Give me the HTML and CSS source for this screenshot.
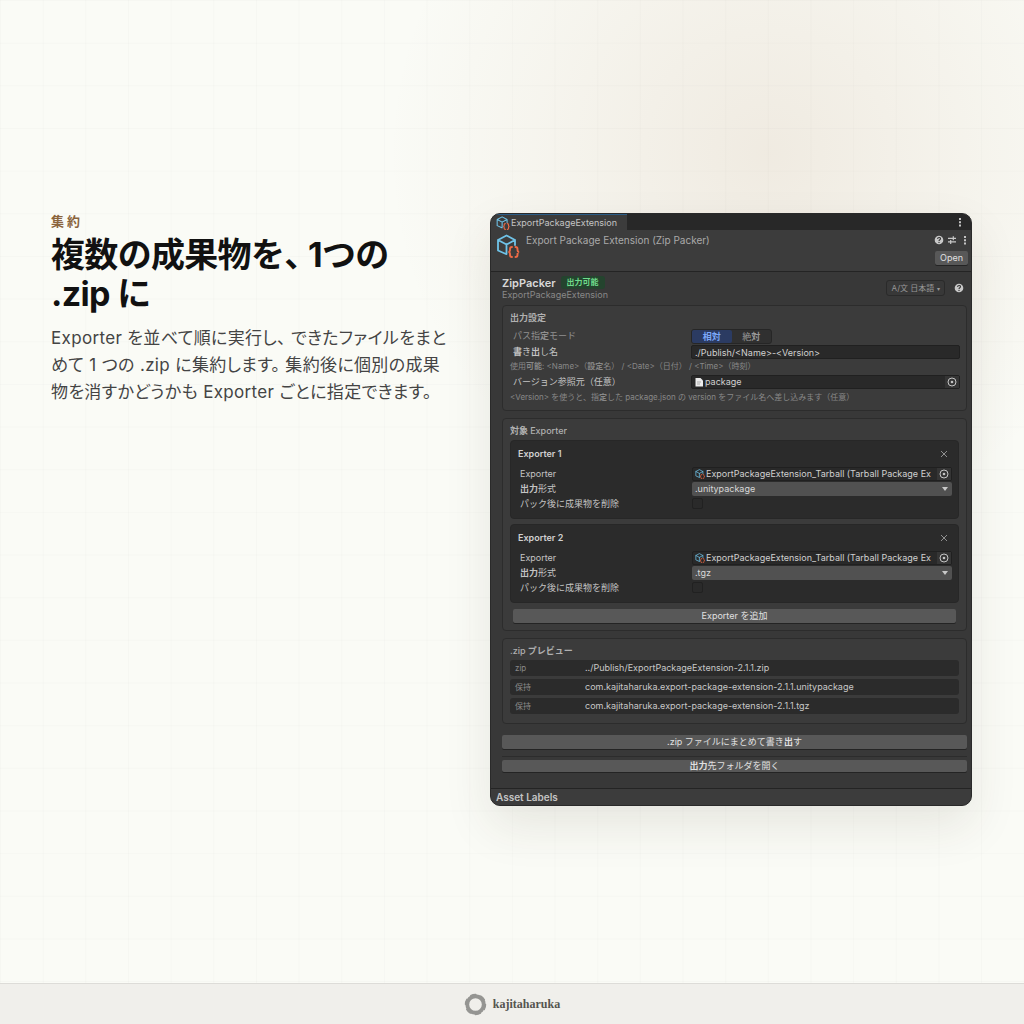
FILE: index.html
```html
<!DOCTYPE html>
<html lang="ja">
<head>
<meta charset="utf-8">
<meta name="viewport" content="width=device-width, initial-scale=1">
<title>Export Package Extension</title>
<link rel="stylesheet" href="styles.css">
</head>
<body>
<svg width="0" height="0" class="defs" aria-hidden="true">
  <symbol id="cube" viewBox="0 0 24 24">
    <path d="M10 20 2 16.500V6l8.500-4.500L19 6v5M2 6l8.500 4.500L19 6M10.500 10.500V20" fill="none" stroke="#6fc3e8" stroke-width="1.800" stroke-linejoin="round" stroke-linecap="round"/>
    <path d="M16 13c-2 0-2 .8-2 2v1.200c0 1-.5 1.600-1.500 1.800 1 .2 1.500.8 1.500 1.800V21c0 1.200 0 2 2 2M19.500 13c2 0 2 .8 2 2v1.200c0 1 .5 1.600 1.500 1.800-1 .2-1.500.8-1.500 1.800V21c0 1.200 0 2-2 2" fill="none" stroke="#ee6a45" stroke-width="1.900" stroke-linecap="round"/>
  </symbol>
  <symbol id="help" viewBox="0 0 10 10">
    <circle cx="5" cy="5" r="4.300" fill="#c8c8c8"/>
    <path d="M3.600 4c0-2 2.900-2 2.900-.3C6.500 4.800 5 4.700 5 6" fill="none" stroke="#383838" stroke-width="1.100"/>
    <circle cx="5" cy="7.400" r=".7" fill="#383838"/>
  </symbol>
  <symbol id="sliders" viewBox="0 0 10 10">
    <path d="M1 3.300H9M6.300 1.300v4M1 6.900H9M3.700 4.900v4" fill="none" stroke="#c8c8c8" stroke-width="1.200"/>
  </symbol>
  <symbol id="dots" viewBox="0 0 10 10">
    <path d="M4 1h2v2H4zM4 4.200h2v2H4zM4 7.400h2v2H4z" fill="#c4c4c4"/>
  </symbol>
  <symbol id="target" viewBox="0 0 10 10">
    <circle cx="5" cy="5" r="4" fill="none" stroke="#c4c4c4" stroke-width="1"/>
    <circle cx="5" cy="5" r="1.300" fill="#c4c4c4"/>
  </symbol>
  <symbol id="close" viewBox="0 0 10 10">
    <path d="M2 2l6 6M8 2 2 8" stroke="#909090" stroke-width="1"/>
  </symbol>
  <symbol id="file" viewBox="0 0 10 10">
    <path d="M1.500 1H6.500L9 3.500V9.500H1.500z" fill="#ececec"/>
    <path d="M3 5h4M3 7h3" stroke="#999" stroke-width=".8"/>
  </symbol>
</svg>

<main class="stage">
  <section class="copy">
    <p class="eyebrow">集約</p>
    <h1 class="headline">複数の成果物を、 1つの .zip に</h1>
    <p class="lead">Exporter を並べて順に実行し、 できたファイルをまとめて 1 つの .zip に集約します。 集約後に個別の成果物を消すかどうかも Exporter ごとに指定できます。</p>
  </section>

  <section class="inspector" aria-label="Inspector">
    <div class="tabbar">
      <span class="tab"><svg class="icon-tab"><use href="#cube"/></svg>ExportPackageExtension</span>
      <button class="icon-btn" aria-label="メニュー"><svg class="icon"><use href="#dots"/></svg></button>
    </div>
    <header class="head">
      <svg class="icon-head"><use href="#cube"/></svg>
      <h2 class="head-title">Export Package Extension (Zip Packer)</h2>
      <div class="head-side">
        <div class="head-icons">
          <button class="icon-btn" aria-label="ヘルプ"><svg class="icon"><use href="#help"/></svg></button>
          <button class="icon-btn" aria-label="プリセット"><svg class="icon"><use href="#sliders"/></svg></button>
          <button class="icon-btn" aria-label="その他"><svg class="icon"><use href="#dots"/></svg></button>
        </div>
        <button class="btn open">Open</button>
      </div>
    </header>

    <div class="body">
      <div class="intro">
        <div class="intro-text">
          <div class="intro-line"><h3 class="name">ZipPacker</h3><span class="badge">出力可能</span></div>
          <p class="sub">ExportPackageExtension</p>
        </div>
        <button class="lang">A/文 日本語 <span class="lang-mark">▾</span></button>
        <button class="icon-btn" aria-label="ヘルプ"><svg class="icon"><use href="#help"/></svg></button>
      </div>

      <section class="group settings">
        <h4 class="group-title"><b>出力設定</b></h4>
        <div class="row">
          <span class="label dim">パス指<b>定</b>モード</span>
          <div class="segment"><button class="seg on">相対</button><button class="seg">絶<b>対</b></button></div>
        </div>
        <div class="row">
          <label class="label" for="outname"><b>書</b>き<b>出</b>し名</label>
          <input class="field" id="outname" value="./Publish/&lt;Name&gt;-&lt;Version&gt;">
        </div>
        <p class="hint">使用<b>可能</b>: &lt;Name&gt;（<b>設定</b>名） / &lt;Date&gt;（日付） / &lt;Time&gt;（時刻）</p>
        <div class="row version">
          <label class="label" for="version">バージョン参照元（任意）</label>
          <div class="field object"><svg class="icon"><use href="#file"/></svg><input class="object-input" id="version" value="package" readonly><button class="icon-btn pick" aria-label="選択"><svg class="icon"><use href="#target"/></svg></button></div>
        </div>
        <p class="hint">&lt;Version&gt; を使うと、指<b>定</b>した package.json の version をファイル名へ差し込みます（任意）</p>
      </section>

      <section class="group">
        <h4 class="group-title"><b>対象</b> <span class="medium">Exporter</span></h4>
        <article class="card">
          <div class="card-head"><h5 class="card-title">Exporter 1</h5><button class="icon-btn" aria-label="削除"><svg class="icon"><use href="#close"/></svg></button></div>
          <div class="row">
            <label class="label" for="exp1">Exporter</label>
            <div class="field object"><svg class="icon"><use href="#cube"/></svg><input class="object-input" id="exp1" value="ExportPackageExtension_Tarball (Tarball Package Ex" readonly><button class="icon-btn pick" aria-label="選択"><svg class="icon"><use href="#target"/></svg></button></div>
          </div>
          <div class="row">
            <label class="label" for="fmt1"><b>出力</b>形式</label>
            <select class="select" id="fmt1"><option>.unitypackage</option></select>
          </div>
          <div class="row">
            <label class="label" for="del1">パック後に成果物を削除</label>
            <input class="check" type="checkbox" id="del1">
          </div>
        </article>
        <article class="card">
          <div class="card-head"><h5 class="card-title">Exporter 2</h5><button class="icon-btn" aria-label="削除"><svg class="icon"><use href="#close"/></svg></button></div>
          <div class="row">
            <label class="label" for="exp2">Exporter</label>
            <div class="field object"><svg class="icon"><use href="#cube"/></svg><input class="object-input" id="exp2" value="ExportPackageExtension_Tarball (Tarball Package Ex" readonly><button class="icon-btn pick" aria-label="選択"><svg class="icon"><use href="#target"/></svg></button></div>
          </div>
          <div class="row">
            <label class="label" for="fmt2"><b>出力</b>形式</label>
            <select class="select" id="fmt2"><option>.tgz</option></select>
          </div>
          <div class="row">
            <label class="label" for="del2">パック後に成果物を削除</label>
            <input class="check" type="checkbox" id="del2">
          </div>
        </article>
        <button class="btn add">Exporter を追加</button>
      </section>

      <section class="group preview">
        <h4 class="group-title"><span class="medium">.zip</span> <b>プレビュー</b></h4>
        <dl class="files">
          <div class="file"><dt class="kind">zip</dt><dd class="path">../Publish/ExportPackageExtension-2.1.1.zip</dd></div>
          <div class="file"><dt class="kind">保持</dt><dd class="path">com.kajitaharuka.export-package-extension-2.1.1.unitypackage</dd></div>
          <div class="file"><dt class="kind">保持</dt><dd class="path">com.kajitaharuka.export-package-extension-2.1.1.tgz</dd></div>
        </dl>
      </section>

      <div class="actions">
        <button class="btn">.zip ファイルにまとめて書き<b>出</b>す</button>
        <div class="open-folder"><button class="btn"><b>出力</b>先フォルダを開く</button></div>
      </div>
    </div>
    <footer class="labels">Asset Labels</footer>
  </section>
</main>

<footer class="site-footer">
  <svg class="ring" viewBox="0 0 24 24" aria-hidden="true">
    <circle cx="12" cy="12" r="8.600" fill="none" stroke="#959592" stroke-width="4"/>
    <circle cx="12" cy="12" r="10.500" fill="none" stroke="#959592" stroke-width="1.400" stroke-dasharray="5.500 5.500" stroke-linecap="round"/>
  </svg>
  <span class="brand">kajitaharuka</span>
</footer>
</body>
</html>
```
FILE: styles.css
```css
* { box-sizing: border-box; margin: 0; padding: 0; }

body {
  --cell: calc(100vw / 24);
  min-height: 100vh;
  display: flex;
  flex-direction: column;
  font-family: Inter, "Noto Sans CJK JP", sans-serif;
  color: #111;
  background-color: #fafbf6;
  background-image:
    linear-gradient(to right, rgba(0, 0, 0, .015) 1px, transparent 1px),
    linear-gradient(to bottom, rgba(0, 0, 0, .015) 1px, transparent 1px),
    radial-gradient(circle at 75% 15%, rgba(170, 125, 85, .13), rgba(170, 125, 85, 0) 380px);
  background-size: var(--cell) var(--cell), var(--cell) var(--cell), 100% 100%;
}

button, input, select { font: inherit; color: inherit; border: 0; background: none; }
b { font-weight: 700; }
.defs { position: absolute; }

.stage {
  flex: 1;
  display: grid;
  grid-template-columns: 399fr 482fr;
  gap: 40px;
  align-items: start;
  padding: 213px 52px 80px 51px;
}

/* Copy column */
.eyebrow { font-size: 13px; line-height: 16px; font-weight: 700; letter-spacing: 3px; color: #8a643c; }
.headline { margin-top: 6px; font-size: 34px; line-height: 39px; font-weight: 700; letter-spacing: -.02em; font-feature-settings: "halt"; }
.lead { margin-top: 12px; font-size: 17px; line-height: 27px; color: #444; letter-spacing: .02em; font-feature-settings: "palt"; }

/* Inspector window */
.inspector {
  overflow: hidden;
  border-radius: 10px;
  border: 1px solid #2a2a2a;
  background: #383838;
  color: #c4c4c4;
  font-size: 9px;
  line-height: 12px;
  box-shadow: 0 20px 48px rgba(60, 50, 30, .1);
}
.icon { display: block; width: 10px; height: 10px; flex: none; }
.icon-btn { display: block; width: 10px; height: 10px; flex: none; }

.tabbar { display: flex; justify-content: space-between; align-items: center; height: 16px; padding-right: 6px; background: #282828; }
.tab { display: flex; align-items: center; gap: 1px; height: 16px; padding: 0 10px 0 5px; border-top: 1px solid #2c5d87; background: #3c3c3c; }
.icon-tab { width: 14px; height: 14px; }

.head { display: flex; height: 42px; padding: 4px 1px 0 5px; background: #3c3c3c; border-bottom: 1px solid #242424; }
.icon-head { width: 24px; height: 24px; }
.head-title { flex: 1; padding-left: 6px; font-size: 10px; font-weight: 400; color: #aaa; }
.head-side { display: flex; flex-direction: column; align-items: flex-end; gap: 6px; }
.head-icons { display: flex; gap: 3px; padding-top: 1px; }
.btn { display: block; width: 100%; height: 14px; border-radius: 2px; background: #585858; color: #e0e0e0; line-height: 14px; text-align: center; box-shadow: 0 1px 0 #242424; }
.open { width: 33px; margin-right: 2px; }

.body { padding: 1px 4px 16px 11px; }
.intro { display: flex; align-items: center; height: 30px; margin-bottom: 2px; padding-right: 3px; }
.intro-text { flex: 1; }
.intro-line { display: flex; align-items: center; gap: 5px; height: 13px; }
.name { font-size: 11px; font-weight: 600; color: #d8d8d8; }
.badge { padding: 0 6px; border-radius: 3px; background: #24442e; color: #6fdc8c; font-size: 8px; line-height: 13px; font-weight: 700; }
.sub { line-height: 11px; color: #888; }
.lang { width: 59px; height: 16px; margin-right: 9px; border: 1px solid #2a2a2a; border-radius: 3px; font-size: 8px; line-height: 14px; color: #999; white-space: nowrap; }
.lang-mark { font-size: 6px; }

.group { margin-bottom: 7px; padding: 5px 7px 6px; border: 1px solid #2c2c2c; border-radius: 4px; background: #3b3b3b; }
.group-title { height: 16px; font-size: 9px; line-height: 14px; font-weight: 700; color: #b0b0b0; }
.medium { font-weight: 500; }
.row { display: grid; grid-template-columns: 181px 1fr; align-items: center; height: 16px; }
.label { padding-left: 3px; line-height: 14px; white-space: nowrap; }
.dim { color: #909090; }
.settings { height: 106px; padding-right: 6px; }
.settings .group-title { height: 17px; }
.hint { height: 13px; font-size: 8px; line-height: 13px; color: #888; white-space: nowrap; }
.segment { display: flex; width: 81px; height: 15px; border: 1px solid #262626; border-radius: 3px; background: #303030; }
.seg { flex: 1; line-height: 13px; color: #999; border-radius: 2px; }
.on { background: #2b3b62; color: #7ba7f7; font-weight: 700; }
.field { width: 100%; min-width: 0; height: 14px; padding: 0 3px; border: 1px solid #202020; border-radius: 2px; background: #292929; line-height: 12px; color: #d0d0d0; }
.version { height: 18px; }
.object { display: flex; align-items: center; gap: 1px; padding: 0 0 0 2px; }
.object-input { flex: 1; min-width: 0; height: 12px; }
.pick { width: 14px; height: 12px; padding: 1px 2px; background: #353535; }

.card { margin-bottom: 5px; padding: 5px 6px 0; height: 79px; border: 1px solid #272727; border-radius: 4px; background: #2b2b2b; }
.card-head { display: flex; justify-content: space-between; align-items: center; height: 15px; margin-bottom: 5px; padding: 0 3px 0 1px; }
.card-title { font-size: 9px; font-weight: 600; color: #d0d0d0; }
.card .row { grid-template-columns: 175px 1fr; height: 15px; }
.select { appearance: none; width: 100%; height: 14px; padding: 0 3px; border-radius: 2px; background: #515151; color: #d8d8d8; line-height: 14px; }
.card .row:has(.select) { position: relative; }
.card .row:has(.select)::after { content: ""; position: absolute; right: 4px; top: 6px; border: 3px solid transparent; border-top: 4px solid #c8c8c8; border-bottom: 0; pointer-events: none; }
.check { appearance: none; width: 11px; height: 11px; border: 1px solid #212121; border-radius: 2px; background: #2a2a2a; }
.add { width: calc(100% - 6px); margin: 6px 3px 1px; }

.preview { padding-bottom: 9px; }
.files { display: grid; gap: 3px; }
.file { display: grid; grid-template-columns: 70px 1fr; height: 16px; padding-left: 5px; border-radius: 3px; background: #2b2b2b; line-height: 16px; }
.kind { font-size: 8px; color: #8a8a8a; }
.path { color: #c8c8c8; }

.actions { margin-top: 11px; }
.open-folder { margin-top: 7px; padding-top: 3px; border-top: 1px solid #2c2c2c; }
.open-folder .btn { height: 12px; line-height: 12px; }
.labels { height: 17px; padding-left: 5px; border-top: 1px solid #242424; background: #3c3c3c; font-size: 10px; line-height: 16px; font-weight: 600; }

/* Page footer */
.site-footer { display: flex; align-items: center; justify-content: center; gap: 6px; height: 41px; border-top: 1px solid #dddcd8; background: #f0efeb; }
.ring { width: 23px; height: 23px; }
.brand { font-family: "Liberation Serif", serif; font-size: 12px; font-weight: 700; color: #55554f; }
```
